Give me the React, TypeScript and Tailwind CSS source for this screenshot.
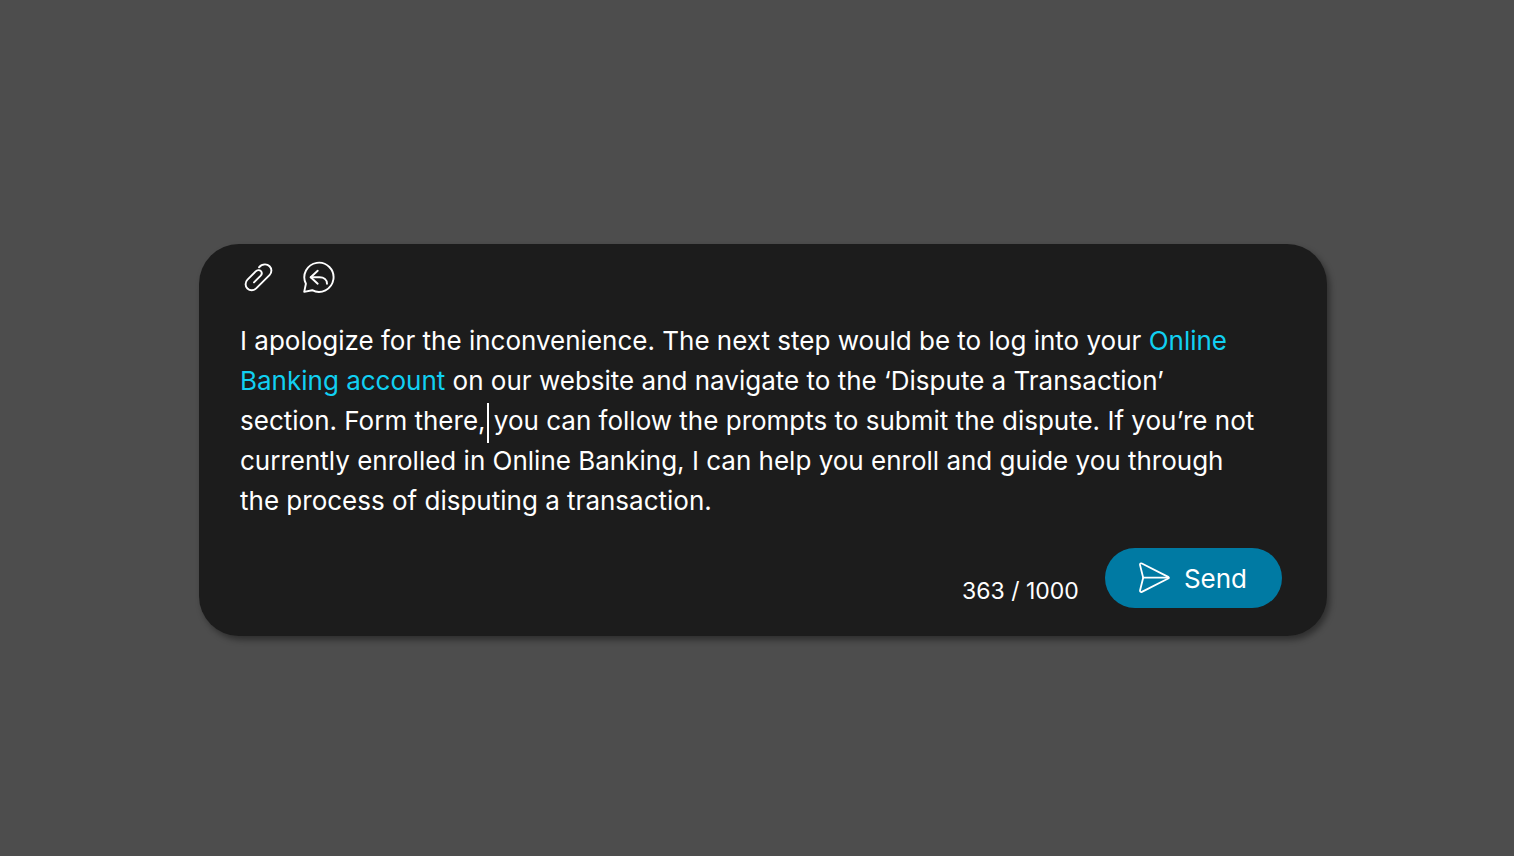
import { useState } from "react";

const MAX_LENGTH = 1000;

function PaperclipIcon() {
  return (
    <svg viewBox="0 0 32 32" className="size-8" fill="none" stroke="currentColor" strokeWidth="1.9" strokeLinecap="round" strokeLinejoin="round" aria-hidden="true">
      <path d="M16 5.3C17.4 3.5 19.5 2.4 22 2.4c3.7 0 6.4 2.8 6.4 6.2 0 1.7-.7 3.4-1.9 4.6L13.2 26.4c-1.2 1.2-2.8 1.9-4.4 1.9-3.5 0-6.2-2.7-6.2-6.1 0-1.7.7-3.3 1.9-4.5l8.2-8.3c1.5-1.5 3.7-1.8 5-.5 1.4 1.4 1.2 3.5-.2 5L11 20.4" />
    </svg>
  );
}

function ReplyBubbleIcon() {
  return (
    <svg viewBox="0 0 34 34" className="size-[34px]" fill="none" stroke="currentColor" strokeWidth="1.9" strokeLinecap="round" strokeLinejoin="round" aria-hidden="true">
      <path d="M3.9 22.8A14.6 14.6 0 1 1 10.2 29.2L2.2 30.9Z" />
      <path d="M15.7 9.7 8.7 16.2l7 6.5" />
      <path d="M8.7 16.2H17.5C22 16.2 25 18.8 25 22.7" />
    </svg>
  );
}

function SendIcon() {
  return (
    <svg viewBox="0 0 32 32" className="size-8" fill="none" stroke="currentColor" strokeWidth="1.8" strokeLinecap="round" strokeLinejoin="round" aria-hidden="true">
      <path d="M2 2.9C1.8 1.7 2.9 1 3.9 1.5L30.2 14.9c.8.4.8 1.2 0 1.6L3.9 29.9C2.9 30.4 1.8 29.7 2 28.5L5.2 15.7Z" />
      <path d="M5.2 15.7H30.5" />
    </svg>
  );
}

export default function App() {
  const [count, setCount] = useState(363);

  return (
    <main className="flex min-h-screen items-center justify-center bg-[#4d4d4d] pt-6 pl-3 font-['Inter',sans-serif] text-white">
      <form
        className="w-3/4 min-w-[1128px] rounded-[40px] bg-[#1c1c1c] pt-[17px] pr-[45px] pb-7 pl-[41px] shadow-[3px_4px_6px_rgba(0,0,0,0.4)]"
        onSubmit={(e) => e.preventDefault()}
      >
        <div className="flex items-center gap-6 pl-[3px]">
          <button type="button" aria-label="Attach file" className="flex h-[34px] w-8 items-center justify-center">
            <PaperclipIcon />
          </button>
          <button type="button" aria-label="Canned responses" className="flex h-[34px] w-10 items-center justify-center">
            <ReplyBubbleIcon />
          </button>
        </div>

        <div
          role="textbox"
          aria-multiline="true"
          aria-label="Message"
          contentEditable
          suppressContentEditableWarning
          spellCheck={false}
          onInput={(e) => setCount(e.currentTarget.textContent?.length ?? 0)}
          className="mt-[26px] mr-5 text-[26px] leading-10 outline-none"
        >
          I apologize for the inconvenience. The next step would be to log into your{" "}
          <a href="#online-banking" className="text-[#11d0f2]">
            Online Banking account
          </a>{" "}
          on our website and navigate to the ‘Dispute a Transaction’ section. Form there,
          <span className="-my-2 -mr-0.5 ml-px inline-block h-10 w-0.5 bg-white align-middle" /> you can follow the
          prompts to submit the dispute. If you’re not currently enrolled in Online Banking, I can help you enroll and
          guide you through the process of disputing a transaction.
        </div>

        <div className="mt-[27px] flex items-end justify-end gap-[26px]">
          <span className="text-[23px] leading-[34px]">
            {count} / {MAX_LENGTH}
          </span>
          <button type="submit" className="flex h-[60px] items-center gap-3.5 rounded-full bg-[#007aa3] pr-[35px] pl-[33px] text-[26px]">
            <SendIcon />
            Send
          </button>
        </div>
      </form>
    </main>
  );
}
